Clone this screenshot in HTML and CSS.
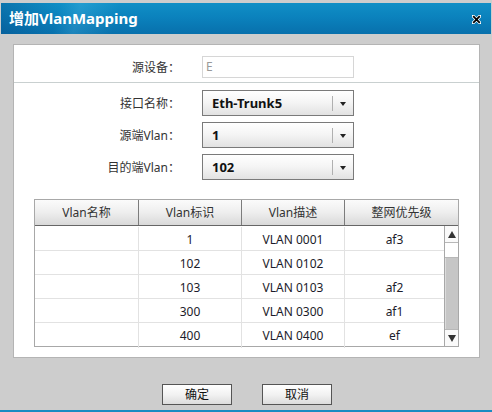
FILE: index.html
```html
<!DOCTYPE html>
<html lang="zh-CN">
<head>
<meta charset="utf-8">
<title>增加VlanMapping</title>
<link rel="stylesheet" href="styles.css">
</head>
<body>
<div class="dialog">
  <div class="titlebar">
    <span class="title">增加VlanMapping</span>
    <svg class="close" width="9" height="9" viewBox="0 0 9 9">
      <path d="M1 1 L8 8 M8 1 L1 8" stroke="#ffffff" stroke-width="3.2" stroke-linecap="square"/>
      <path d="M1.2 1.2 L7.8 7.8 M7.8 1.2 L1.2 7.8" stroke="#000000" stroke-width="1.8"/>
    </svg>
  </div>

  <div class="panel">
    <div class="form-row first">
      <span class="label">源设备：</span>
      <div class="input">E</div>
    </div>
    <div class="sep"></div>
    <div class="selects">
      <div class="form-row">
        <span class="label">接口名称：</span>
        <div class="select"><span class="sel-text">Eth-Trunk5</span><span class="sel-div"></span><span class="sel-arrow"></span></div>
      </div>
      <div class="form-row">
        <span class="label">源端Vlan：</span>
        <div class="select"><span class="sel-text">1</span><span class="sel-div"></span><span class="sel-arrow"></span></div>
      </div>
      <div class="form-row">
        <span class="label">目的端Vlan：</span>
        <div class="select"><span class="sel-text">102</span><span class="sel-div"></span><span class="sel-arrow"></span></div>
      </div>
    </div>

    <div class="grid">
      <div class="grid-head">
        <div class="hcell">Vlan名称</div>
        <div class="hcell">Vlan标识</div>
        <div class="hcell">Vlan描述</div>
        <div class="hcell last">整网优先级</div>
      </div>
      <div class="grid-body">
        <div class="rows">
          <div class="row"><div class="cell"></div><div class="cell">1</div><div class="cell">VLAN 0001</div><div class="cell last">af3</div></div>
          <div class="row"><div class="cell"></div><div class="cell">102</div><div class="cell">VLAN 0102</div><div class="cell last"></div></div>
          <div class="row"><div class="cell"></div><div class="cell">103</div><div class="cell">VLAN 0103</div><div class="cell last">af2</div></div>
          <div class="row"><div class="cell"></div><div class="cell">300</div><div class="cell">VLAN 0300</div><div class="cell last">af1</div></div>
          <div class="row lastrow"><div class="cell"></div><div class="cell">400</div><div class="cell">VLAN 0400</div><div class="cell last">ef</div></div>
        </div>
        <div class="scrollbar">
          <div class="sb-btn"><span class="tri up"></span></div>
          <div class="sb-thumb"></div>
          <div class="sb-track"></div>
          <div class="sb-btn bottom"><span class="tri down"></span></div>
        </div>
      </div>
    </div>
  </div>

  <div class="footer">
    <button class="btn">确定</button>
    <button class="btn">取消</button>
  </div>
  <div class="bottom-line"></div>
</div>
</body>
</html>
```

FILE: styles.css
```css
* { box-sizing: border-box; }

html, body {
  margin: 0;
  padding: 0;
}

body {
  background: #cdcdcd;
  font-family: "Noto Sans", "Noto Sans CJK SC", sans-serif;
  font-size: 12px;
  color: #222;
}

.dialog {
  width: 492px;
  height: 412px;
  display: flex;
  flex-direction: column;
  overflow: hidden;
}

.titlebar {
  margin: 3px 1px 0 1px;
  height: 31px;
  display: flex;
  align-items: center;
  justify-content: space-between;
  padding: 0 10px 0 8px;
  background:
    linear-gradient(105deg, rgba(0, 50, 110, 0.28) 0%, rgba(0, 50, 110, 0) 12%, rgba(120, 220, 255, 0.18) 16%, rgba(120, 220, 255, 0) 24%),
    linear-gradient(to bottom, #108fc6 0%, #0b82bd 45%, #0870ac 100%);
}

.title {
  color: #fff;
  font-size: 15px;
  font-weight: bold;
  line-height: 1;
  margin-top: -1px;
}

.close {
  display: block;
  margin-top: 2px;
}

.panel {
  margin: 10px 12px 0 13px;
  height: 314px;
  background: #fff;
  border: 1px solid #b4b4b4;
  padding-top: 11px;
}

.form-row {
  display: grid;
  grid-template-columns: 166px 152px;
  column-gap: 22px;
  align-items: center;
}

.label {
  text-align: right;
  color: #333;
  font-size: 12px;
  white-space: nowrap;
}

.input {
  height: 22px;
  border: 1px solid #d6d6d6;
  color: #999;
  padding-left: 3px;
  line-height: 20px;
  font-size: 12px;
}

.sep {
  margin-top: 4px;
  height: 1px;
  background: #c9d0d0;
}

.selects {
  padding-top: 7px;
  display: flex;
  flex-direction: column;
  gap: 6px;
}

.select {
  height: 26px;
  border: 1px solid #7a7a7a;
  background: linear-gradient(to bottom, #ffffff 0%, #f4f4f4 50%, #e2e2e2 100%);
  display: flex;
  align-items: center;
  position: relative;
}

.sel-text {
  flex: 1;
  padding-left: 9px;
  font-weight: bold;
  font-size: 13px;
  color: #111;
}

.sel-div {
  width: 1px;
  height: 15px;
  background: #b0b0b0;
}

.sel-arrow {
  width: 20px;
  height: 100%;
  display: flex;
  align-items: center;
  justify-content: center;
}

.sel-arrow::before {
  content: "";
  border-left: 3px solid transparent;
  border-right: 3px solid transparent;
  border-top: 4px solid #222;
  margin-top: 1px;
}

.grid {
  margin: 19px 20px 0 20px;
  height: 148px;
  border: 1px solid #a8a8a8;
  display: flex;
  flex-direction: column;
}

.grid-head {
  display: grid;
  grid-template-columns: 104px 103px 103px 1fr;
  height: 26px;
  border-bottom: 1px solid #666;
  background: linear-gradient(to bottom, #fbfbfb 0%, #eeeeee 50%, #d9d9d9 100%);
}

.hcell {
  border-right: 1px solid #7c7c7c;
  text-align: center;
  line-height: 25px;
  color: #333;
  font-size: 12px;
}

.hcell.last { border-right: 0; }

.grid-body {
  flex: 1;
  display: flex;
}

.rows {
  flex: 1;
  padding-top: 1px;
}

.row {
  display: grid;
  grid-template-columns: 104px 103px 103px 1fr;
  height: 24px;
  border-bottom: 1px solid #e2e2e2;
}

.row.lastrow { border-bottom: 0; height: 23px; }

.cell {
  border-right: 1px solid #e2e2e2;
  text-align: center;
  line-height: 25px;
  font-size: 12px;
  color: #1c1c2a;
}

.cell.last { border-right: 0; }

.scrollbar {
  width: 14px;
  border-left: 1px solid #a8a8a8;
  display: flex;
  flex-direction: column;
}

.sb-btn {
  height: 17px;
  background: #fafafa;
  display: flex;
  align-items: center;
  justify-content: center;
  border-bottom: 1px solid #b8b8b8;
}

.sb-btn.bottom {
  border-bottom: 0;
  border-top: 1px solid #b8b8b8;
}

.tri.up {
  border-left: 4px solid transparent;
  border-right: 4px solid transparent;
  border-bottom: 7px solid #333;
}

.tri.down {
  border-left: 4px solid transparent;
  border-right: 4px solid transparent;
  border-top: 7px solid #333;
}

.sb-thumb {
  height: 15px;
  background: #ffffff;
  border-bottom: 1px solid #b8b8b8;
}

.sb-track {
  flex: 1;
  background: #c6c6c6;
  border-left: 1px solid #dcdcdc;
}

.footer {
  margin-top: 26px;
  display: flex;
  justify-content: center;
  gap: 30px;
  padding-left: 2px;
}

.btn {
  width: 70px;
  height: 21px;
  border: 1px solid #555;
  background: linear-gradient(to bottom, #ffffff 0%, #f2f2f2 50%, #dcdcdc 100%);
  font-family: "Noto Sans", "Noto Sans CJK SC", sans-serif;
  font-size: 12px;
  color: #111;
  padding: 0;
  line-height: 19px;
}

.bottom-line {
  margin-top: 5px;
  height: 2px;
  background: #1a8cc2;
}
```
